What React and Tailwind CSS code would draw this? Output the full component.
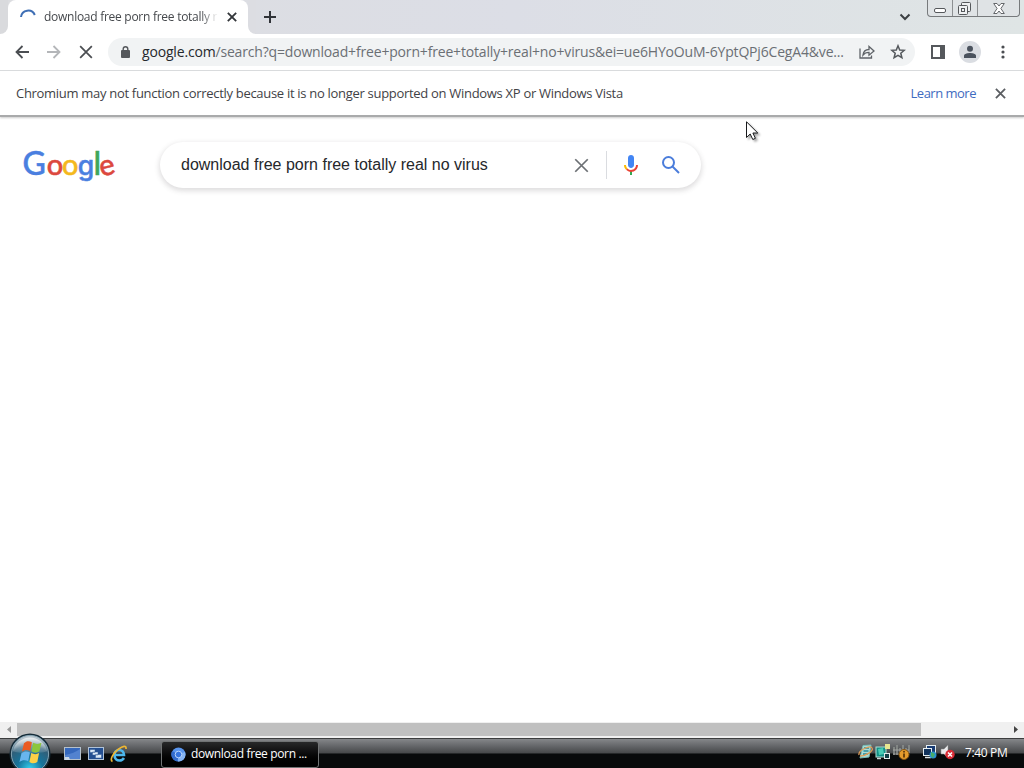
import React from "react";

const Cross = ({ className, size = 12, width = 1.8 }) => (
  <svg className={className} width={size} height={size} viewBox="0 0 12 12" fill="none" stroke="currentColor" strokeWidth={width}>
    <path d="M1 1 11 11M11 1 1 11" />
  </svg>
);

function TabStrip() {
  return (
    <header className="flex h-[34px] shrink-0 bg-linear-to-r from-[#dcdde0] via-[#dcdee6] to-[#dfe5e5]">
      <div className="flex w-2 items-end bg-white">
        <div className="h-full w-2 rounded-br-lg bg-[#d9dadd]" />
      </div>
      <div className="flex w-[240px] items-center rounded-t-lg bg-white pl-3">
        <svg className="shrink-0" width="16" height="16" viewBox="0 0 16 16" fill="none" stroke="#3f6fb5" strokeWidth="2">
          <path d="M1 8A7.2 7.2 0 0 1 14.8 6" />
        </svg>
        <div className="ml-2 w-[174px] overflow-hidden text-[12px] tracking-[-0.27px] whitespace-nowrap text-[#45484c] mask-r-from-90% mask-r-to-100%">
          download free porn free totally real no virus
        </div>
        <Cross className="ml-[9px] shrink-0 text-[#33363a]" size={10} width={2.2} />
      </div>
      <div className="w-2 bg-white">
        <div className="h-full w-2 rounded-bl-lg bg-[#dcdde2]" />
      </div>
      <svg className="mt-[11px] ml-2" width="12" height="12" viewBox="0 0 12 12" stroke="#303338" strokeWidth="2">
        <path d="M6 0V12M0 6H12" />
      </svg>
      <svg className="mt-[13px] ml-auto" width="12" height="8" viewBox="0 0 12 8" fill="none" stroke="#3c4043" strokeWidth="2">
        <path d="M1.5 1.5 6 6 10.500 1.5" />
      </svg>
      <div className="mr-1 ml-[16px] flex h-[17px] w-[93px] rounded-b-[4px] border border-t-0 border-[#777a7c] bg-[#dfe3e5] text-[#55585b]">
        <div className="flex w-[25px] items-center justify-center border-r border-[#8d9092]">
          <svg width="12" height="5" viewBox="0 0 12 5" className="mt-1" fill="#fff" stroke="currentColor"><rect x=".5" y=".5" width="11" height="4" rx="1.500" /></svg>
        </div>
        <div className="flex w-[25px] items-center justify-center border-r border-[#8d9092]">
          <svg className="mr-px" width="13" height="13" viewBox="0 0 13 13" fill="#eef0f1" stroke="currentColor">
            <rect x="3.500" y=".5" width="9" height="9" rx="1" />
            <rect x=".5" y="3.500" width="9" height="9" rx="1" />
            <rect x="3.500" y="6.500" width="3" height="3" />
          </svg>
        </div>
        <div className="flex flex-1 items-center justify-center">
          <svg width="12" height="11" viewBox="0 0 12 11" fill="#fff" stroke="currentColor" strokeWidth=".9">
            <path d="M.7.5H4L6 3 8 .5H11.300L7.900 5.500 11.300 10.500H8L6 8 4 10.500H.7L4.100 5.500Z" />
          </svg>
        </div>
      </div>
    </header>
  );
}

function Toolbar() {
  return (
    <div className="flex h-[37px] shrink-0 items-center border-b border-[#dadcde] bg-white pl-[15px] text-[#4b4e52]">
      <svg width="14" height="14" viewBox="0 0 14 14" fill="none" stroke="currentColor" strokeWidth="1.8"><path d="M14 7H1.500M7.500 1 1.500 7 7.500 13" /></svg>
      <svg className="ml-[18px] text-[#b4b6b9]" width="14" height="14" viewBox="0 0 14 14" fill="none" stroke="currentColor" strokeWidth="1.800"><path d="M0 7H12.500M6.500 1 12.500 7 6.500 13" /></svg>
      <Cross className="ml-[18px]" size={14} width={1.5} />
      <div className="ml-[15px] flex h-7 w-[807px] items-center rounded-full bg-[#f1f3f4] pl-[13px]">
        <svg width="9" height="12" viewBox="0 0 9 12" fill="none">
          <rect y="4" width="9" height="8" rx="1" fill="#55585c" />
          <path d="M2.200 5V3A2.300 2.300 0 0 1 6.800 3V5" stroke="#55585c" strokeWidth="1.400" />
        </svg>
        <div className="ml-[12px] w-[703px] pb-px text-[14px] tracking-[-0.175px] whitespace-nowrap text-[#6b6f74]">
          <span className="text-[#25282c]">google.com</span>/search?q=download+free+porn+free+totally+real+no+virus&amp;ei=ue6HYoOuM-6YptQPj6CegA4&amp;ve...
        </div>
        <svg className="ml-[14px]" width="16" height="14" viewBox="0 0 16 14" fill="none" stroke="#5f6368" strokeWidth="1.300">
          <path d="M1 3.500V13H12.500V10.500M4 10C4.500 6 7 4.500 10 4.500V1.500L15 6 10 10.200V7.300C7.500 7.300 5.500 8 4 10Z" />
        </svg>
        <svg className="ml-[15px]" width="16" height="16" viewBox="0 0 16 16" fill="none" stroke="#55595d" strokeWidth="1.500">
          <path d="M8 1.800 9.700 6 14.300 6.300 10.800 9.300 11.900 13.700 8 11.300 4.100 13.700 5.200 9.300 1.700 6.300 6.300 6Z" />
        </svg>
      </div>
      <svg className="ml-[16px]" width="14" height="14" viewBox="0 0 14 14"><path fill="#55585c" fillRule="evenodd" d="M0 0H14V14H0ZM2 2V12H9V2Z" /></svg>
      <svg className="ml-[14px]" width="22" height="22" viewBox="0 0 22 22">
        <circle cx="11" cy="11" r="11" fill="#dadde2" />
        <circle cx="11" cy="7.800" r="3" fill="#4b535e" />
        <path d="M5 17V14.800C5 12.800 8.500 12 11 12S17 12.800 17 14.800V17Z" fill="#4b535e" />
      </svg>
      <svg className="ml-[20px]" width="4" height="14" viewBox="0 0 4 14" fill="#4b4e52"><circle cx="2" cy="2" r="1.600" /><circle cx="2" cy="7" r="1.600" /><circle cx="2" cy="12" r="1.600" /></svg>
    </div>
  );
}

function InfoBar() {
  return (
    <div className="relative z-10 flex h-[46px] shrink-0 items-center border-b-2 border-[#a9aaab] bg-white px-4 text-[13px] whitespace-nowrap text-[#3f4246] shadow-[0_1px_2px_#ccc]">
      <span className="pt-px tracking-[-0.3px]">Chromium may not function correctly because it is no longer supported on Windows XP or Windows Vista</span>
      <a className="ml-auto pt-px tracking-[-0.5px] text-[#3f6bc0]">Learn more</a>
      <Cross className="mr-[2px] ml-[19px] text-[#5b5e62]" size={11} width={2} />
    </div>
  );
}

function Logo() {
  return (
    <svg className="overflow-visible" width="92" height="36" viewBox="0 0 92 36" fontFamily="Lato, sans-serif" fontSize="32" fontWeight="500" strokeWidth=".5">
      <text y="27">
        <tspan x="-1.5" fill="#4a7fe0" stroke="#4a7fe0">G</tspan>
        <tspan x="22.700" fontSize="29" fill="#dc483e" stroke="#dc483e">o</tspan>
        <tspan x="38" fontSize="29" fill="#f4b81d" stroke="#f4b81d">o</tspan>
        <tspan x="53.800" fontFamily="Inter, sans-serif" fontSize="26.500" fill="#4a7fe0" stroke="#4a7fe0">g</tspan>
        <tspan x="69.500" fill="#40a65a" stroke="#40a65a">l</tspan>
      </text>
      <text x="75.500" y="27" fontSize="29" transform="rotate(-14 83.500 19.500)" fill="#dc483e" stroke="#dc483e">e</text>
    </svg>
  );
}

function SearchPage() {
  return (
    <main className="flex min-h-0 flex-1 items-start bg-white pt-[25px] pl-6">
      <div className="mt-[6px] h-9 w-[136px]"><Logo /></div>
      <div className="flex h-[46px] w-[541px] items-center rounded-full bg-white pl-[21px] font-['Liberation_Sans',Arial,sans-serif] text-[16px] text-[#26282b] shadow-[0_2px_5px_1px_rgba(64,60,67,.17)]">
        <span className="w-[393px] tracking-[0px] whitespace-nowrap">download free porn free totally real no virus</span>
        <Cross className="text-[#6c7074]" size={15} width={1.400} />
        <div className="ml-[17px] h-7 w-px bg-[#dadce0]" />
        <svg className="ml-[12px]" width="24" height="24" viewBox="0 0 24 24">
          <path fill="#4285f4" d="M12 15c1.660 0 3-1.310 3-2.970V4.970C15 3.310 13.660 2 12 2S9 3.310 9 4.970v7.060C9 13.690 10.340 15 12 15z" />
          <path fill="#34a853" d="M11 18.080h2V22h-2z" />
          <path fill="#fbbc04" d="M7.050 16.870C5.780 15.590 5 13.900 5 12h2c0 1.450.560 2.420 1.470 3.380z" />
          <path fill="#ea4335" d="M12 16.930a4.970 5.250 0 0 1-3.540-1.550l-1.410 1.490C8.310 18.140 10.060 19 12 19c3.870 0 6.990-2.920 6.990-7h-1.990c0 2.920-2.240 4.930-5 4.930z" />
        </svg>
        <svg className="ml-[16px]" width="24" height="24" viewBox="0 0 24 24" fill="none" stroke="#4b7ddb" strokeWidth="2">
          <circle cx="9.500" cy="9.500" r="5.500" /><path d="M13.500 13.500 20 20" />
        </svg>
      </div>
    </main>
  );
}

function ScrollBar() {
  return (
    <div className="flex h-4 shrink-0 items-center bg-[#f0f0f0] pb-[2px]">
      <div className="flex w-[17px] justify-center"><svg width="4" height="7" viewBox="0 0 4 7" fill="#999"><path d="M4 0V7L0 3.500Z" /></svg></div>
      <div className="h-[13px] w-[904px] bg-[#c0c0c0]" />
      <svg className="mr-[6px] ml-auto" width="4" height="7" viewBox="0 0 4 7" fill="#444"><path d="M0 0V7L4 3.500Z" /></svg>
    </div>
  );
}

function StartOrb() {
  return (
    <svg width="42" height="42" viewBox="0 0 44 44">
      <defs>
        <radialGradient id="orb" cx=".5" cy=".9" r=".85">
          <stop offset="0" stopColor="#35d0ee" /><stop offset=".4" stopColor="#17749b" /><stop offset=".75" stopColor="#315e78" /><stop offset="1" stopColor="#b9c6ce" />
        </radialGradient>
        <linearGradient id="shine" x2="0" y2="1"><stop offset="0" stopColor="#fff" stopOpacity=".75" /><stop offset="1" stopColor="#fff" stopOpacity=".1" /></linearGradient>
      </defs>
      <circle cx="22" cy="22" r="21.500" fill="#152b38" />
      <circle cx="22" cy="22" r="19.500" fill="url(#orb)" stroke="#87a6b6" />
      <path d="M4 19A18.500 18.500 0 0 1 40 19C31 22 13 22 4 19Z" fill="url(#shine)" />
      <g transform="translate(22.500 20) scale(.87 1.080) translate(-20.800 -21.500)">
        <path d="M13 13C16 10.500 19 10.500 22.500 12L20.500 20.500C17 19 14 19 10.500 21Z" fill="#ea5b22" />
        <path d="M24 12.500C27 14 31 14 34 12.500L31.500 21C28.500 22.500 25 22.500 22 21Z" fill="#8cc63c" />
        <path d="M10 22.500C13.500 20.500 17 20.500 20.200 22L18 30.500C15 29 11 29 7.500 31Z" fill="#68b5ed" />
        <path d="M21.700 22.500C25 24 28 24 31.200 22.500L29 31C25.500 33 22 32.500 19.500 31Z" fill="#fbd046" />
      </g>
    </svg>
  );
}

function QuickLaunch() {
  return (
    <div className="mb-px flex items-center">
      <svg width="17" height="14" viewBox="0 0 17 14"><rect x=".5" y=".5" width="16" height="12" fill="#3568bd" stroke="#b5c1cc" /><path d="M1 8C7 7 12 5 16 2V12H1Z" fill="#5282cf" /><path d="M1 10H5L6 13H1Z" fill="#c9d8e8" /></svg>
      <svg className="ml-[7px]" width="16" height="13" viewBox="0 0 16 13"><rect x=".5" y=".5" width="15" height="12" fill="#244f91" stroke="#afc2d8" /><path d="M2 2.500H7V5.500H2ZM4.500 5H10V8H4.500ZM7.500 7.500H13.500V11H7.500Z" fill="#dce9f6" stroke="#315b97" strokeWidth=".5" /></svg>
      <svg className="ml-[6px]" width="18" height="18" viewBox="0 0 18 18" fill="none">
        <path d="M4 10H14C14 6.500 11.500 5 9 5S4.500 7 4.500 10.500 7 15.500 9.500 15.500 13 14.500 14 13" stroke="#4db7ed" strokeWidth="2.700" />
        <path d="M2.500 16.500C-.5 15 3 8 8 4.500S16.500 0 16 4" stroke="#edb633" strokeWidth="1.700" />
      </svg>
    </div>
  );
}

function Tray() {
  return (
    <div className="mb-[5px] flex items-center">
      <svg width="15" height="16" viewBox="0 0 15 16" fill="none">
        <path d="M5 1.500 13 1 11 13 2 14Z" fill="#a9dcd8" stroke="#79bdb5" /><path d="M6 4H11M5.500 7H10.500M5 10H10" stroke="#298b98" strokeWidth="1.500" />
        <path d="M1 11C0 6 12 1 14 4S8 12 2 12" stroke="#e09e58" strokeWidth="1.300" />
      </svg>
      <svg className="ml-[2px]" width="16" height="16" viewBox="0 0 16 16"><rect x="1" y="3" width="10" height="10" fill="#138f86" stroke="#b2dfd5" /><path d="M3 5 8 4 9 10 4 11Z" fill="#49ccb5" /><rect x="10" y="0" width="5" height="5" fill="#e7e790" /><rect x="9.500" y="9.500" width="5" height="5" fill="#113f45" stroke="#e5eeee" /><path d="M2 14.500H6" stroke="#c9d9d9" strokeWidth="1.500" /></svg>
      <svg className="ml-[2px]" width="17" height="16" viewBox="0 0 17 16"><path d="M1 3V11M4 1V11M7 4V11M10 1V9M13 4V9M16 1V9" stroke="#8d918f" strokeWidth="1.500" /><path d="M0 6H16M0 10H8" stroke="#a5a6a3" /><circle cx="11" cy="10.500" r="5" fill="#e49b2c" stroke="#865613" /><path d="M11 7V8.500M11 9.500V13.500" stroke="#59350a" strokeWidth="1.700" /></svg>
      <svg className="ml-[12px]" width="16" height="16" viewBox="0 0 16 16"><rect x="4.500" y="1.500" width="9" height="8" fill="#173b73" stroke="#e4edf1" /><rect x="1.500" y="4.500" width="8" height="7" fill="#12335c" stroke="#e4edf1" /><path d="M3 13.500H9" stroke="#dce5e8" strokeWidth="1.500" /><circle cx="11" cy="11" r="3.500" fill="#2b91d0" /><path d="M9 8 13 10 11 14 9 12Z" fill="#47ae67" /></svg>
      <svg className="ml-[2px]" width="17" height="16" viewBox="0 0 17 16"><path d="M1 5H4L8 1V14L4 10H1Z" fill="#e9eaec" stroke="#888" strokeWidth=".5" /><circle cx="10" cy="10.500" r="4.700" fill="#d92b35" /><path d="M8 8.500 12 12.500M12 8.500 8 12.500" stroke="#fff" strokeWidth="1.500" /></svg>
      <time className="ml-[8px] w-[43px] pt-[3px] text-[12px] tracking-[-0.35px] whitespace-nowrap text-white">7:40 PM</time>
    </div>
  );
}

function TaskBar() {
  return (
    <footer className="relative flex h-[30px] shrink-0 items-center border-t border-[#3c3d3e] bg-linear-to-b from-[#85878a] from-0% via-[#47494b] via-48% to-[#080a0b] to-52% pt-px pr-4 pl-16">
      <div className="absolute -top-[6px] left-[9px] h-[35px] overflow-hidden"><StartOrb /></div>
      <QuickLaunch />
      <button className="ml-[33px] flex h-[27px] w-[158px] items-center rounded-[3px] border border-[#707374] bg-linear-to-b from-[#28292a] to-[#000] pl-[9px] text-[12px] whitespace-nowrap text-white">
        <svg width="15" height="15" viewBox="0 0 15 15"><circle cx="7.500" cy="7.500" r="7" fill="#5995ed" /><path d="M7.500 7.500 1.200 4A7 7 0 0 0 6.500 14.400Z" fill="#326bcb" /><path d="M7.500 7.500 14 5A7 7 0 0 1 7 14.500Z" fill="#85b4f4" /><circle cx="7.500" cy="7.500" r="3.300" fill="#3675de" stroke="#b9d4fa" /></svg>
        <span className="ml-[5px] tracking-[-0.35px]">download free porn ...</span>
      </button>
      <div className="ml-auto"><Tray /></div>
    </footer>
  );
}

export default function App() {
  return (
    <div className="relative flex h-[768px] w-[1024px] flex-col overflow-hidden bg-white font-['Open_Sans','Noto_Sans',sans-serif]">
      <TabStrip />
      <Toolbar />
      <InfoBar />
      <SearchPage />
      <ScrollBar />
      <TaskBar />
      <svg className="absolute top-[121px] left-[746px] z-20 drop-shadow-[2px_2px_1px_rgba(0,0,0,0.35)]" width="13" height="20" viewBox="0 0 13 20">
        <path d="M.5 .8V16.500L4.200 13 6.800 18.500 9.400 17.300 6.900 12H11.800Z" fill="#fff" stroke="#17191b" />
      </svg>
    </div>
  );
}
